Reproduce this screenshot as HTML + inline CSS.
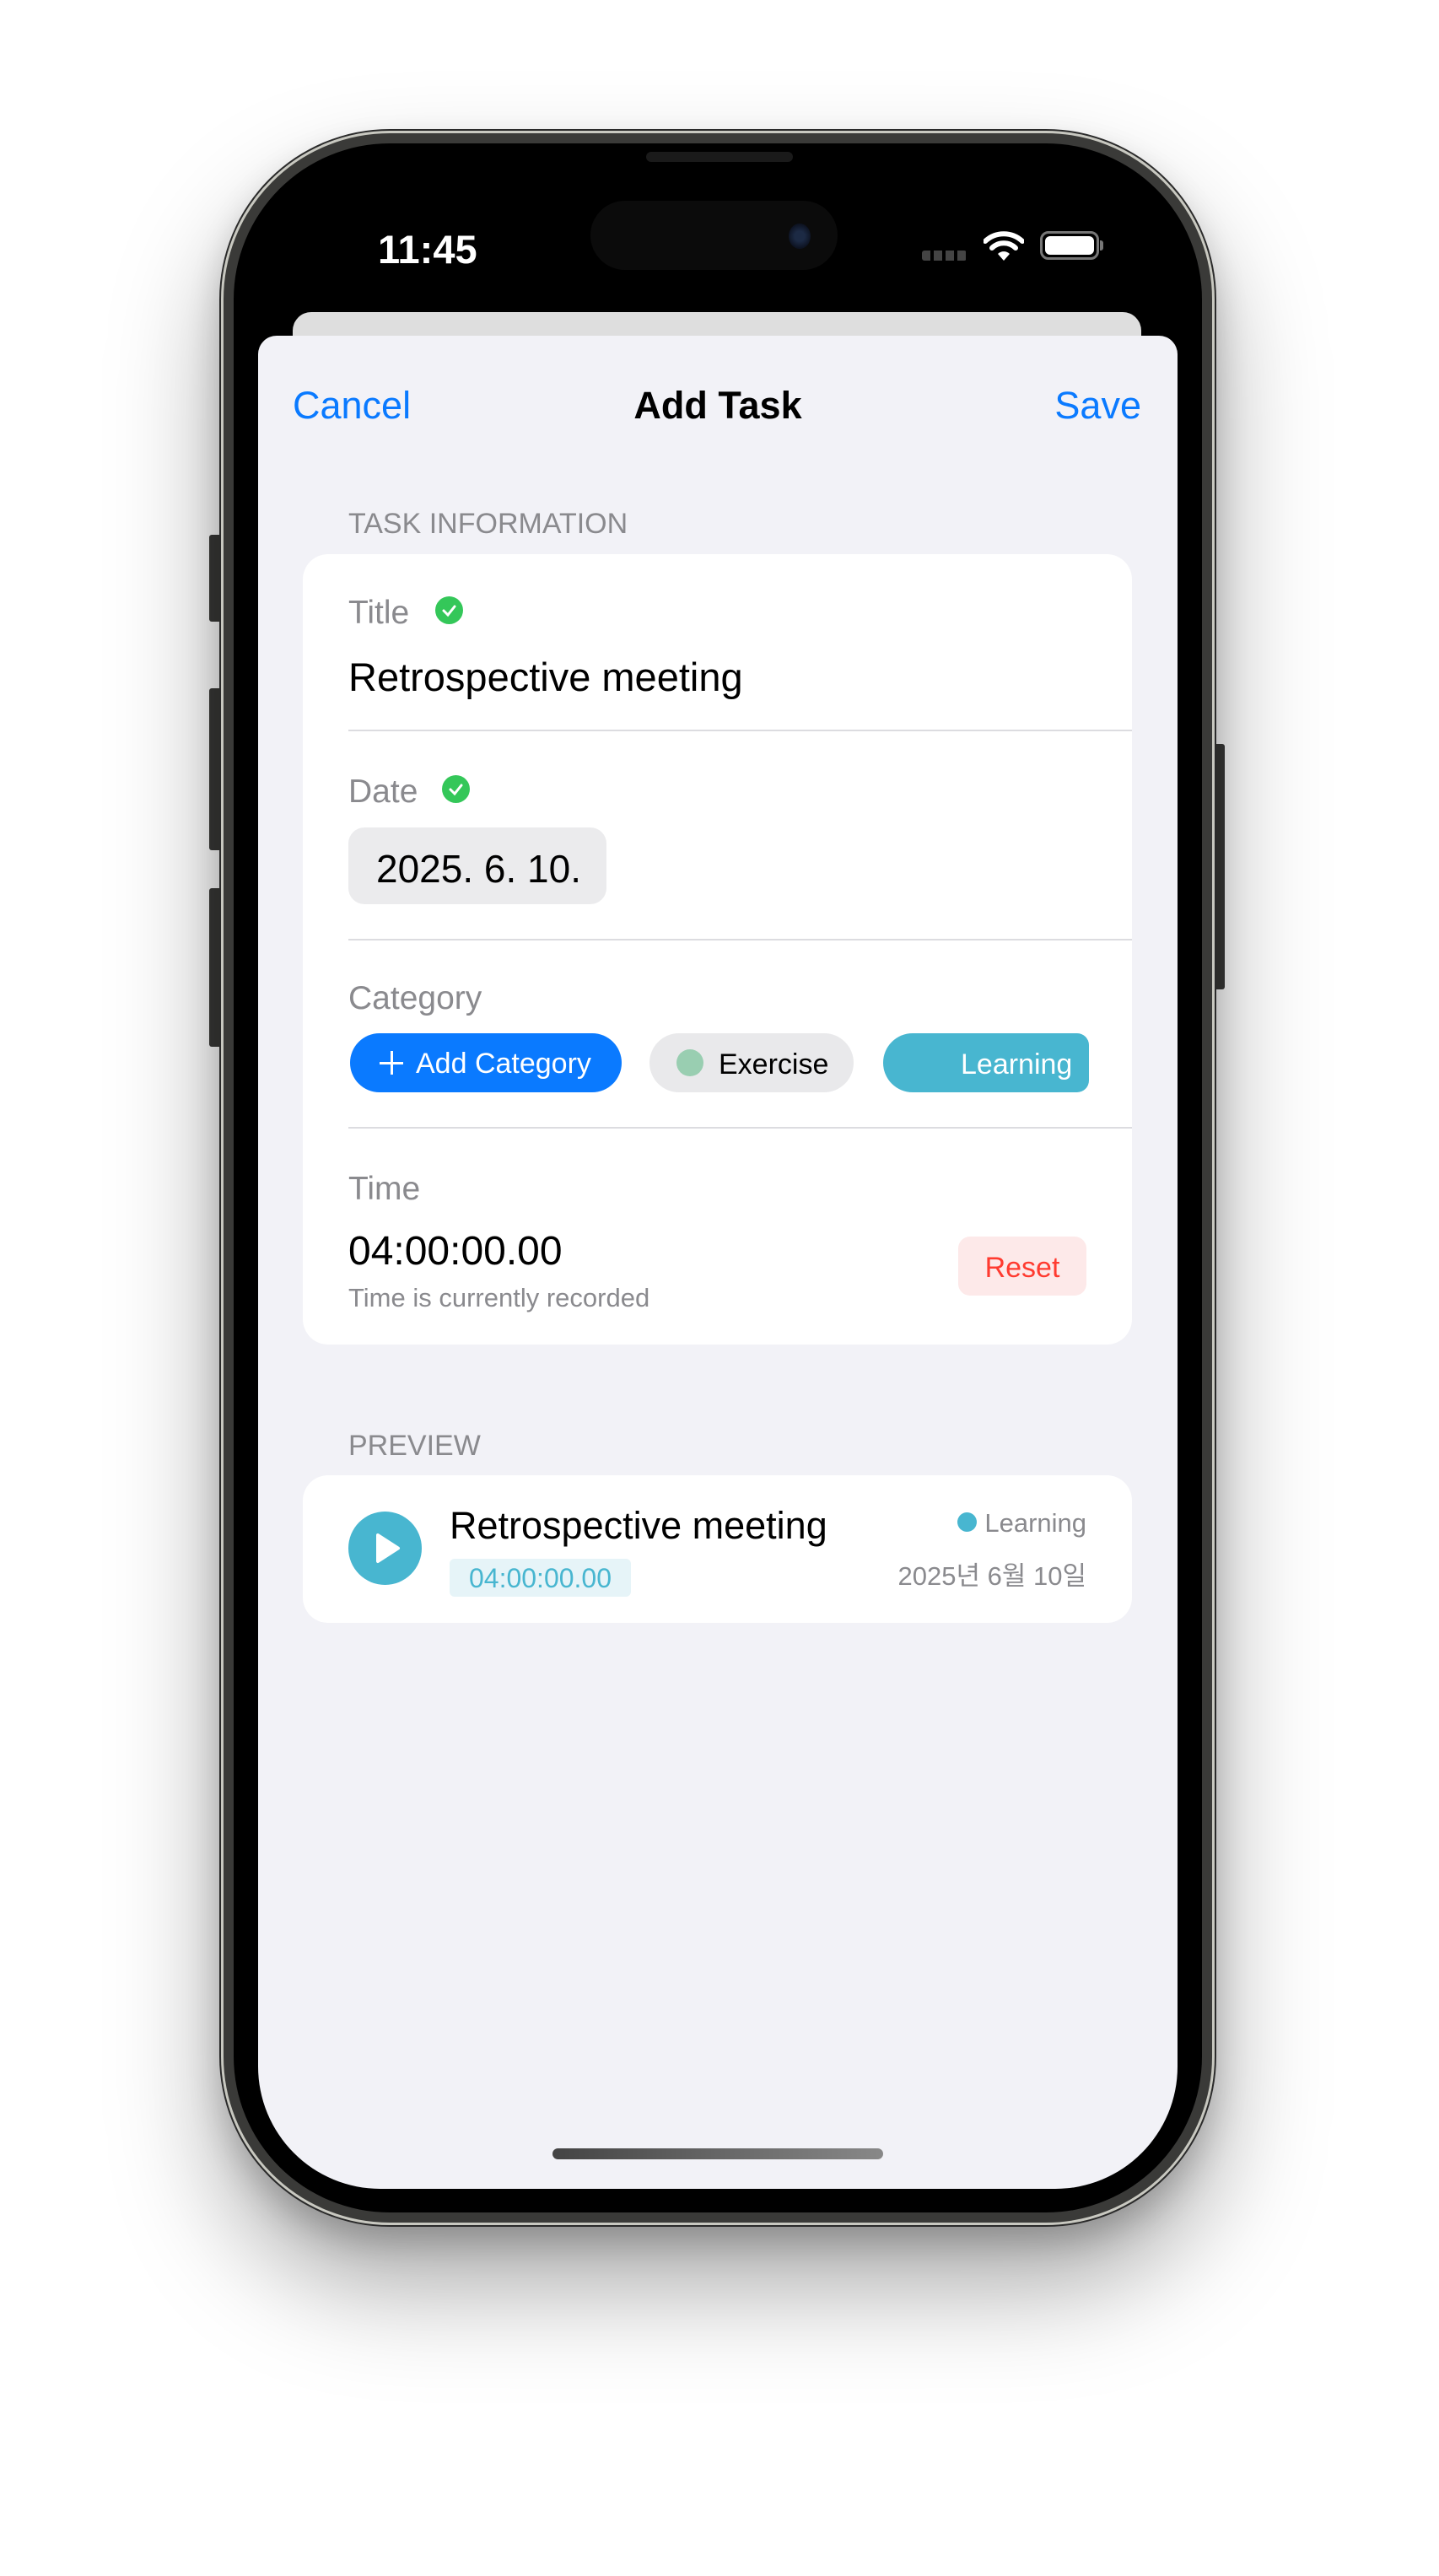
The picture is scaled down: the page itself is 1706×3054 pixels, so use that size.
<!DOCTYPE html>
<html><head><meta charset="utf-8"><style>
*{margin:0;padding:0;box-sizing:border-box}
body{width:1706px;height:3054px;background:#fff;position:relative;overflow:hidden;font-family:"Liberation Sans","Noto Sans CJK KR",sans-serif}
.abs{position:absolute}
.phone{left:262px;top:155px;width:1178px;height:2483px;border-radius:200px;background:#3a3a38;border:3px solid #c8c8c0;box-shadow:0 0 0 2px #2a2a2a,0 70px 140px rgba(0,0,0,.35),0 20px 40px rgba(0,0,0,.2)}
.screen{left:277px;top:170px;width:1148px;height:2453px;border-radius:185px;background:#000}
.btn{background:#3a3a38;border-radius:3px}
.sheet{left:306px;top:398px;width:1090px;height:2197px;background:#f2f2f7;border-radius:22px 22px 145px 145px;overflow:hidden}
.t{position:absolute;white-space:nowrap;line-height:1}
.card{position:absolute;background:#fff;border-radius:30px}
.lbl{color:#8a8a8e;font-size:38px}
.div{position:absolute;height:2px;background:#dcdce0}
.chk{position:absolute;width:33px;height:33px;border-radius:50%;background:#34c759}
</style></head><body>
<div class="abs btn" style="left:248px;top:634px;width:16px;height:103px"></div>
<div class="abs btn" style="left:248px;top:816px;width:16px;height:192px"></div>
<div class="abs btn" style="left:248px;top:1053px;width:16px;height:188px"></div>
<div class="abs btn" style="left:1438px;top:882px;width:14px;height:291px"></div>
<div class="abs phone"></div>
<div class="abs screen"></div>
<div class="abs" style="left:766px;top:180px;width:174px;height:12px;border-radius:6px;background:#1a1a1a"></div>
<div class="abs" style="left:700px;top:238px;width:293px;height:82px;border-radius:41px;background:#0b0b0b"></div>
<div class="abs" style="left:935px;top:265px;width:26px;height:30px;border-radius:50%;background:radial-gradient(circle,#1c2a44 30%,#0d1322 70%)"></div>
<div class="t" style="left:448px;top:272px;font-size:47px;font-weight:bold;color:#fff">11:45</div>
<div class="abs" style="left:1093px;top:297px;width:53px;height:12px;background:repeating-linear-gradient(90deg,#444 0 10px,transparent 10px 14px);border-radius:3px"></div>
<svg class="abs" style="left:1166px;top:274px" width="48" height="36" viewBox="0 0 48 36"><path d="M2 12 A32 32 0 0 1 46 12" stroke="#fff" stroke-width="6" fill="none" stroke-linecap="round"/><path d="M10 20 A20 20 0 0 1 38 20" stroke="#fff" stroke-width="6" fill="none" stroke-linecap="round"/><path d="M17 27 L24 35 L31 27 A10 10 0 0 0 17 27Z" fill="#fff"/></svg>
<div class="abs" style="left:1233px;top:274px;width:70px;height:34px;border:3px solid #777;border-radius:10px;padding:3px"><div style="width:100%;height:100%;background:#fff;border-radius:6px"></div></div>
<div class="abs" style="left:1304px;top:285px;width:4px;height:12px;background:#777;border-radius:0 3px 3px 0"></div>
<div class="abs" style="left:347px;top:370px;width:1006px;height:60px;background:#dedede;border-radius:22px 22px 0 0"></div>
<div class="abs sheet">
<div class="t" style="left:41px;top:60px;font-size:45px;color:#0a7aff">Cancel</div>
<div class="t" style="left:0;width:1090px;text-align:center;top:60px;font-size:45px;font-weight:bold;color:#000">Add Task</div>
<div class="t" style="right:43px;top:60px;font-size:45px;color:#0a7aff">Save</div>
<div class="t lbl" style="left:107px;top:206px;font-size:34px">TASK INFORMATION</div>
<div class="card" style="left:53px;top:259px;width:983px;height:937px">
<div class="t lbl" style="left:54px;top:50px;font-size:39px">Title</div>
<div class="chk" style="left:157px;top:50px"><svg width="33" height="33"><path d="M10 17l5 5 8-10" stroke="#fff" stroke-width="3" fill="none" stroke-linecap="round"/></svg></div>
<div class="t" style="left:54px;top:122px;font-size:47px;color:#000">Retrospective meeting</div>
<div class="div" style="left:54px;right:0;top:208px"></div>
<div class="t lbl" style="left:54px;top:262px;font-size:39px">Date</div>
<div class="chk" style="left:165px;top:262px"><svg width="33" height="33"><path d="M10 17l5 5 8-10" stroke="#fff" stroke-width="3" fill="none" stroke-linecap="round"/></svg></div>
<div class="abs" style="left:54px;top:324px;width:306px;height:91px;border-radius:19px;background:#ebebed"></div>
<div class="t" style="left:87px;top:350px;font-size:46px;color:#000">2025. 6. 10.</div>
<div class="div" style="left:54px;right:0;top:456px"></div>
<div class="t lbl" style="left:54px;top:507px;font-size:39px">Category</div>
<div class="abs" style="left:56px;top:568px;width:322px;height:70px;border-radius:35px;background:#0a7aff"></div>
<div class="abs" style="left:91px;top:602px;width:28px;height:3px;background:#fff"></div>
<div class="abs" style="left:104px;top:589px;width:3px;height:28px;background:#fff"></div>
<div class="t" style="left:134px;top:587px;font-size:34px;color:#fff">Add Category</div>
<div class="abs" style="left:411px;top:568px;width:242px;height:70px;border-radius:35px;background:#e9e9eb"></div>
<div class="abs" style="left:443px;top:587px;width:32px;height:32px;border-radius:50%;background:#99ceb1"></div>
<div class="t" style="left:493px;top:588px;font-size:34px;color:#000">Exercise</div>
<div class="abs" style="left:688px;top:568px;width:244px;height:70px;border-radius:35px 14px 14px 35px;background:#48b6d0"></div>
<div class="t" style="left:780px;top:588px;font-size:34px;color:#fff">Learning</div>
<div class="div" style="left:54px;right:0;top:679px"></div>
<div class="t lbl" style="left:54px;top:733px;font-size:39px">Time</div>
<div class="t" style="left:54px;top:803px;font-size:48px;color:#000">04:00:00.00</div>
<div class="t" style="left:54px;top:866px;font-size:31px;color:#8a8a8e">Time is currently recorded</div>
<div class="abs" style="left:777px;top:809px;width:152px;height:70px;border-radius:14px;background:#fde9e9"></div>
<div class="t" style="left:777px;width:152px;text-align:center;top:829px;font-size:34px;color:#ff3b30">Reset</div>
</div>
<div class="t lbl" style="left:107px;top:1299px;font-size:34px">PREVIEW</div>
<div class="card" style="left:53px;top:1351px;width:983px;height:175px">
<div class="abs" style="left:54px;top:43px;width:87px;height:87px;border-radius:50%;background:#48b6d0"><svg width="87" height="87"><path d="M35 28 L59 43.5 L35 59Z" fill="#fff" stroke="#fff" stroke-width="4" stroke-linejoin="round"/></svg></div>
<div class="t" style="left:174px;top:37px;font-size:45px;color:#000">Retrospective meeting</div>
<div class="abs" style="left:174px;top:99px;width:215px;height:45px;border-radius:6px;background:#e6f4f8"></div>
<div class="t" style="left:174px;width:215px;text-align:center;top:106px;font-size:32px;color:#48b6d0">04:00:00.00</div>
<div class="abs" style="left:776px;top:44px;width:23px;height:23px;border-radius:50%;background:#48b6d0"></div>
<div class="t" style="right:54px;top:41px;font-size:31px;color:#8a8a8e">Learning</div>
<div class="t" style="right:54px;top:104px;font-size:31px;color:#8a8a8e">2025년 6월 10일</div>
</div>
<div class="abs" style="left:349px;top:2149px;width:392px;height:13px;border-radius:7px;background:linear-gradient(90deg,#444,#666 50%,#888)"></div>
</div>
</body></html>
